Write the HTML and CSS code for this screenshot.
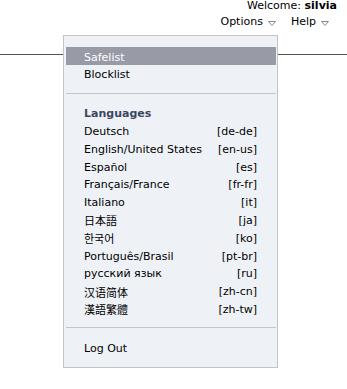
FILE: index.html
```html
<!DOCTYPE html>
<html lang="en">
<head>
  <meta charset="UTF-8">
  <title>Options</title>
  <meta name="viewport" content="width=device-width, initial-scale=1.0">
  <link rel="stylesheet" href="styles.css">
</head>
<body>
  <div class="header">
    <div class="welcome">Welcome: <b>silvia</b></div>
    <div class="menus">
      <span class="menu">Options
        <svg class="arrow" width="8" height="5" viewBox="0 0 8 5"><polygon points="0.5,0.5 7.5,0.5 4,4.5" fill="#fff" stroke="#8a8a8a" stroke-width="1"/></svg>
      </span>
      <span class="menu">Help
        <svg class="arrow" width="8" height="5" viewBox="0 0 8 5"><polygon points="0.5,0.5 7.5,0.5 4,4.5" fill="#fff" stroke="#8a8a8a" stroke-width="1"/></svg>
      </span>
    </div>
  </div>
  <div class="rule"></div>

  <div class="dropdown">
    <div class="item active">Safelist</div>
    <div class="item">Blocklist</div>
    <div class="sep"></div>
    <div class="item heading">Languages</div>
    <div class="item"><span>Deutsch</span><span>[de-de]</span></div>
    <div class="item"><span>English/United States</span><span>[en-us]</span></div>
    <div class="item"><span>Español</span><span>[es]</span></div>
    <div class="item"><span>Français/France</span><span>[fr-fr]</span></div>
    <div class="item"><span>Italiano</span><span>[it]</span></div>
    <div class="item"><span lang="ja" class="cjk-ja">日本語</span><span>[ja]</span></div>
    <div class="item"><span lang="ko" class="cjk-ko">한국어</span><span>[ko]</span></div>
    <div class="item"><span>Português/Brasil</span><span>[pt-br]</span></div>
    <div class="item"><span>русский язык</span><span>[ru]</span></div>
    <div class="item"><span lang="zh-CN" class="cjk-sc">汉语简体</span><span>[zh-cn]</span></div>
    <div class="item"><span lang="zh-TW" class="cjk-tc">漢語繁體</span><span>[zh-tw]</span></div>
    <div class="sep"></div>
    <div class="item">Log Out</div>
  </div>
</body>
</html>
```

FILE: styles.css
```css
body {
  margin: 0;
  font-family: "DejaVu Sans", Verdana, sans-serif;
  font-size: 11px;
  color: #000;
  background-color: #fff;
}
.header {
  text-align: right;
}
.welcome {
  line-height: 11px;
  padding-right: 10px;
}
.menus {
  display: flex;
  justify-content: flex-end;
  gap: 15px;
  padding-right: 18px;
  margin-top: 3px;
  line-height: 16px;
}
.menu {
  display: flex;
  align-items: center;
  gap: 5px;
}
.arrow {
  display: block;
  margin-top: 2px;
}
.rule {
  margin-top: 24px;
  border-top: 1px solid #555;
}
.dropdown {
  position: absolute;
  top: 35px;
  left: 63px;
  width: 210px;
  padding: 11px 1px 11px 2px;
  border: 1px solid #c4c4c4;
  background-color: #eef2f7;
}
.item {
  box-sizing: border-box;
  display: flex;
  justify-content: space-between;
  align-items: center;
  height: 17.8px;
  padding: 2px 19px 0 18px;
  white-space: nowrap;
}
.item.active {
  background-color: #989ba6;
  color: #fff;
  height: 18px;
}
.item.heading {
  font-weight: bold;
  color: #3a4762;
}
.sep {
  margin: 10px 0;
  border-top: 1px solid #c6c6c6;
}
.cjk-ja {
  font-family: "DejaVu Sans", "Noto Sans CJK JP", sans-serif;
}
.cjk-ko {
  font-family: "DejaVu Sans", "Noto Sans CJK KR", sans-serif;
}
.cjk-sc {
  font-family: "DejaVu Sans", "Noto Sans CJK SC", sans-serif;
}
.cjk-tc {
  font-family: "DejaVu Sans", "Noto Sans CJK TC", sans-serif;
}
```
